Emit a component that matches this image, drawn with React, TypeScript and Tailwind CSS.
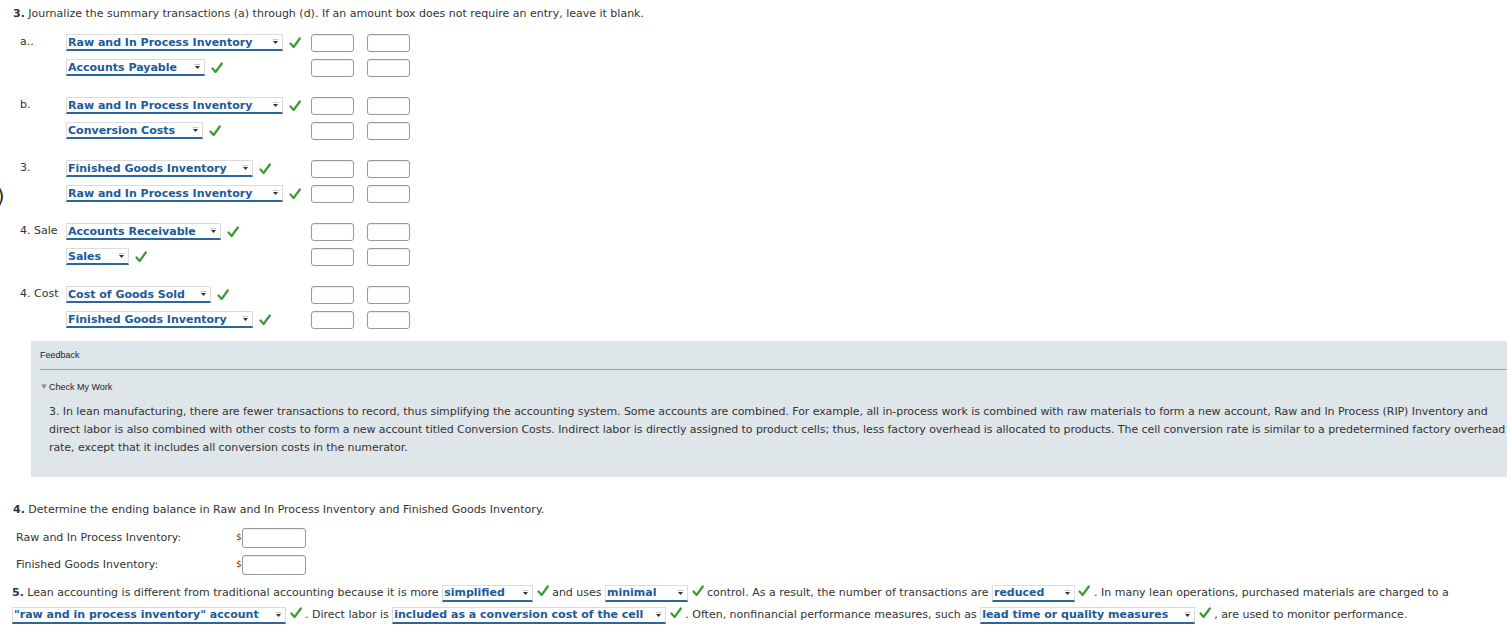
import React from 'react'

const Check = () => (
  <svg width="12" height="12" viewBox="0 0 12 12" className="inline-block shrink-0 align-[-1px]">
    <path d="M1.5 6.5 L4.6 10 L10.8 1.5" fill="none" stroke="#3a9a35" strokeWidth="2.2" strokeLinecap="round" strokeLinejoin="round" />
  </svg>
)

const Arrow = () => (
  <svg width="7" height="6" viewBox="0 0 7 6" className="shrink-0">
    <path d="M0.5 0.5 H6.5" stroke="#c8c8c8" strokeWidth="1" />
    <path d="M1 2 L6 2 L3.5 5 Z" fill="#333" />
  </svg>
)

function Pick({ text, w }: { text: string; w: string }) {
  return (
    <span
      className={`inline-flex items-center justify-between h-[17px] bg-white border border-[#dcdcdc] border-b-2 border-b-[#2b679f] font-bold text-[#1c5a99] pl-px pr-[3px] leading-none align-middle whitespace-nowrap ${w}`}
    >
      <span>{text}</span>
      <Arrow />
    </span>
  )
}

const Box = ({ w = 'w-[43px]', h = 'h-[18px]' }: { w?: string; h?: string }) => (
  <span className={`inline-block ${w} ${h} bg-white border border-[#9a9a9a] rounded-[3px] shadow-[inset_0_1px_1px_rgba(0,0,0,0.08)]`} />
)

type Line = { text: string; w: string }
type Entry = { label: string; lines: Line[] }

const entries: Entry[] = [
  {
    label: 'a..',
    lines: [
      { text: 'Raw and In Process Inventory', w: 'w-[217px]' },
      { text: 'Accounts Payable', w: 'w-[139px]' },
    ],
  },
  {
    label: 'b.',
    lines: [
      { text: 'Raw and In Process Inventory', w: 'w-[217px]' },
      { text: 'Conversion Costs', w: 'w-[137px]' },
    ],
  },
  {
    label: '3.',
    lines: [
      { text: 'Finished Goods Inventory', w: 'w-[187px]' },
      { text: 'Raw and In Process Inventory', w: 'w-[217px]' },
    ],
  },
  {
    label: '4. Sale',
    lines: [
      { text: 'Accounts Receivable', w: 'w-[155px]' },
      { text: 'Sales', w: 'w-[63px]' },
    ],
  },
  {
    label: '4. Cost',
    lines: [
      { text: 'Cost of Goods Sold', w: 'w-[145px]' },
      { text: 'Finished Goods Inventory', w: 'w-[187px]' },
    ],
  },
]

export default function App() {
  return (
    <div
      className="relative min-h-[627px] overflow-hidden bg-white text-[11px] text-[#333] pl-[13px]"
      style={{ fontFamily: '"DejaVu Sans", Verdana, sans-serif' }}
    >
      <div className="pt-[5px] leading-[18px]">
        <b>3.</b> Journalize the summary transactions (a) through (d). If an amount box does not require an entry, leave it blank.
      </div>

      <div className="mt-[7px] flex flex-col gap-[13px]">
        {entries.map((e, i) => (
          <div key={i} className="flex flex-col">
            {e.lines.map((l, j) => (
              <div key={j} className="relative flex items-center h-[25px]">
                {i === 2 && j === 1 && (
                  <span className="absolute left-[-16px] top-[1px] text-[19px] text-[#222]">)</span>
                )}
                <span className="w-[53px] pl-[7px] whitespace-nowrap">{j === 0 ? e.label : ''}</span>
                <span className="w-[245px] flex items-center gap-[6px]">
                  <Pick text={l.text} w={l.w} />
                  <Check />
                </span>
                <span className="flex gap-[13px]">
                  <Box />
                  <Box />
                </span>
              </div>
            ))}
          </div>
        ))}
      </div>

      <div className="mt-[9px] ml-[18px] h-[136px] bg-[#dfe6ea] pl-[9px] pt-[8px]">
        <div className="text-[9px] text-[#222] leading-[12px]" style={{ fontFamily: '"Liberation Sans", Arial, sans-serif' }}>
          Feedback
        </div>
        <div className="mt-[8px] border-t border-[#9a9fa3]" />
        <div
          className="mt-[11px] flex items-center gap-px text-[9px] text-[#222] leading-[12px]"
          style={{ fontFamily: '"Liberation Sans", Arial, sans-serif' }}
        >
          <span className="text-[8px] text-[#888]">▼</span>
          <span>Check My Work</span>
        </div>
        <p className="mt-[10px] pl-[9px] leading-[18px] whitespace-nowrap text-[#333] tracking-[-0.07px]">
          3. In lean manufacturing, there are fewer transactions to record, thus simplifying the accounting system. Some accounts are combined. For example, all in-process work is combined with raw materials to form a new account, Raw and In Process (RIP) Inventory and
          <br />
          direct labor is also combined with other costs to form a new account titled Conversion Costs. Indirect labor is directly assigned to product cells; thus, less factory overhead is allocated to products. The cell conversion rate is similar to a predetermined factory overhead
          <br />
          rate, except that it includes all conversion costs in the numerator.
        </p>
      </div>

      <div className="mt-[24px] leading-[18px]">
        <b>4.</b> Determine the ending balance in Raw and In Process Inventory and Finished Goods Inventory.
      </div>
      <div className="mt-[9px] flex flex-col gap-[7px] pl-[3px]">
        {['Raw and In Process Inventory:', 'Finished Goods Inventory:'].map((t) => (
          <div key={t} className="flex items-center h-[20px]">
            <span className="w-[220px]">{t}</span>
            <span className="w-[6px] text-[9px] text-[#5a4020]">$</span>
            <Box w="w-[64px]" h="h-[20px]" />
          </div>
        ))}
      </div>

      <div className="mt-[7px] leading-[22px] -ml-px">
        <div className="whitespace-nowrap">
          <b>5.</b> Lean accounting is different from traditional accounting because it is more <Pick text="simplified" w="w-[91px]" /> <Check />{' '}
          and uses <Pick text="minimal" w="w-[83px]" /> <Check /> control. As a result, the number of transactions are{' '}
          <Pick text="reduced" w="w-[83px]" /> <Check /> . In many lean operations, purchased materials are charged to a
        </div>
        <div className="whitespace-nowrap">
          <Pick text={'"raw and in process inventory" account'} w="w-[274px]" /> <Check /> . Direct labor is{' '}
          <Pick text="included as a conversion cost of the cell" w="w-[274px]" /> <Check /> . Often, nonfinancial performance measures, such as{' '}
          <Pick text="lead time or quality measures" w="w-[215px]" /> <Check /> , are used to monitor performance.
        </div>
      </div>
    </div>
  )
}
